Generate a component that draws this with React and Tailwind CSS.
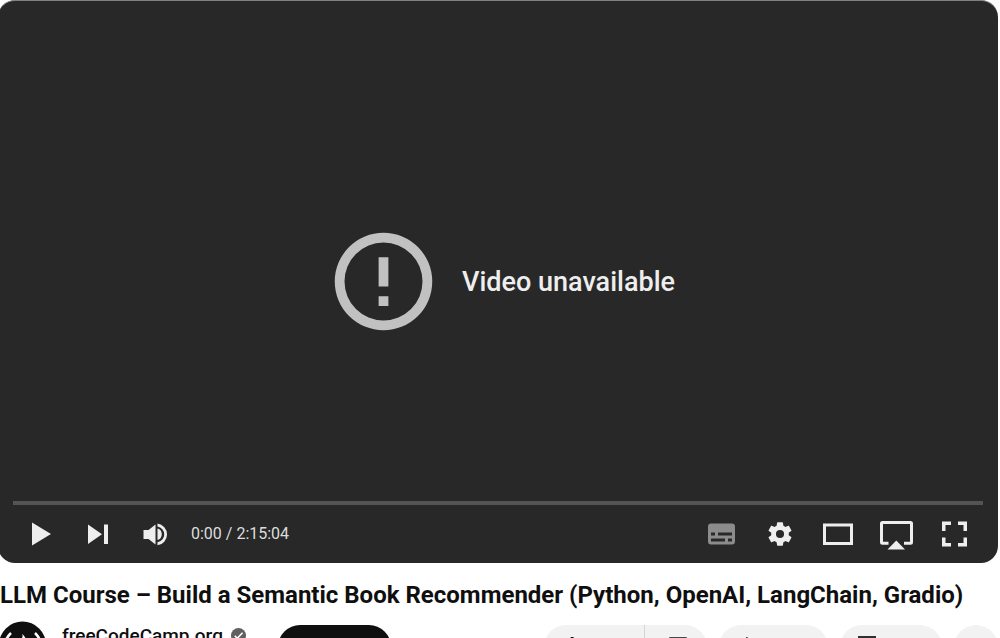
import React from "react";

function IconButton({ label, wide, children }) {
  return (
    <button
      type="button"
      aria-label={label}
      className={
        wide
          ? "flex h-[58px] w-[58px] items-center justify-center"
          : "flex h-[58px] w-[57px] items-center justify-center"
      }
    >
      <svg viewBox="0 0 58 58" className="h-[58px] w-[58px] shrink-0" fill="#eeeeee">
        {children}
      </svg>
    </button>
  );
}

function Message() {
  return (
    <div className="col-start-1 row-start-1 flex items-center justify-center gap-5 pl-1">
      <svg viewBox="0 0 24 24" className="h-[117px] w-[117px]" fill="#c1c1c1">
        <path d="M11 15h2v2h-2zm0-8h2v6h-2zM12 2a10 10 0 1 0 0 20 10 10 0 0 0 0-20zm0 18a8 8 0 1 1 0-16 8 8 0 0 1 0 16z" />
      </svg>
      <p className="text-[27px] leading-8 font-medium text-[#eeeeee]">Video unavailable</p>
    </div>
  );
}

function Controls() {
  return (
    <div className="col-start-1 row-start-1 self-end px-[15px]">
      <div className="h-1 bg-[#545454]" />
      <div className="flex items-center justify-between">
        <div className="flex items-center">
          <IconButton label="Play">
            <path d="M19 17.500v23L38 29z" />
          </IconButton>
          <IconButton label="Next">
            <path d="M18 19.500v19.500L32 29.200zM34 19.500h4v19.500h-4z" />
          </IconButton>
          <IconButton label="Mute">
            <path d="M16.500 25v9h5l7 5.500V19.500l-7 5.500zM30.500 23.500v11.500a6 6 0 0 0 0-11.500z" />
            <path d="M30.500 18.500v3a8 8 0 0 1 0 15.800v3a11 11 0 0 0 0-21.800z" />
          </IconButton>
          <span className="pl-[7px] text-base text-[#dddddd]">0:00 / 2:15:04</span>
        </div>
        <div className="flex items-center">
          <IconButton label="Subtitles" wide>
            <path
              fill="#8c8c8c"
              fillRule="evenodd"
              d="M18 18.500h21a3 3 0 0 1 3 3v15a3 3 0 0 1-3 3H18a3 3 0 0 1-3-3v-15a3 3 0 0 1 3-3zM18 27.500v3h4v-3zM25 27.500v3H39v-3zM18 33.500v3H32v-3zM35 33.500v3h4v-3z"
            />
          </IconButton>
          <IconButton label="Settings" wide>
            <g transform="translate(14.300 14.300) scale(1.225)">
              <path d="M19.14 12.940c.04-.3.06-.61.06-.94 0-.32-.02-.64-.07-.94l2.030-1.580c.18-.14.23-.41.12-.61l-1.920-3.320c-.12-.22-.37-.29-.59-.22l-2.390.96c-.5-.38-1.030-.7-1.620-.94l-.36-2.540c-.04-.24-.24-.41-.48-.41h-3.840c-.24 0-.43.17-.47.41l-.36 2.540c-.59.24-1.130.57-1.620.94l-2.390-.96c-.22-.08-.47 0-.59.22L2.740 8.870c-.12.21-.08.47.12.61l2.030 1.580c-.05.3-.09.63-.09.94s.02.64.07.94l-2.030 1.580c-.18.14-.23.41-.12.61l1.920 3.320c.12.22.37.29.59.22l2.390-.96c.5.38 1.030.7 1.620.94l.36 2.540c.05.24.24.41.48.41h3.840c.24 0 .44-.17.47-.41l.36-2.540c.59-.24 1.130-.56 1.620-.94l2.390.96c.22.08.47 0 .59-.22l1.920-3.320c.12-.22.07-.47-.12-.61zM12 15.300a3.300 3.300 0 1 1 0-6.600 3.300 3.300 0 0 1 0 6.600z" />
            </g>
          </IconButton>
          <IconButton label="Theater mode" wide>
            <path fillRule="evenodd" d="M14 18.500h30v21.500H14zM17 21.500V37h24V21.500z" />
          </IconButton>
          <IconButton label="AirPlay" wide>
            <path d="M21.500 38.300H15.500a1 1 0 0 1-1-1V18.500a1 1 0 0 1 1-1h28a1 1 0 0 1 1 1V37.300a1 1 0 0 1-1 1H37" fill="none" stroke="#eeeeee" strokeWidth="3" />
            <path d="M29.300 35.500L20.500 44.500H38z" />
          </IconButton>
          <IconButton label="Full screen" wide>
            <path d="M17 16.500h9v3.500h-5.500v6H17zM33 16.500h9V26h-3.500v-6H33zM17 32.500h3.500v5.500H26v3.500h-9zM38.500 32.500H42v9h-9V38h5.500z" />
          </IconButton>
        </div>
      </div>
    </div>
  );
}

function ChannelRow() {
  return (
    <div className="flex items-start justify-between pt-[10px]">
      <div className="flex items-start">
        <a href="#channel" aria-label="Channel page" className="block">
          <svg viewBox="0 0 48 48" className="h-12 w-12">
            <circle cx="24.500" cy="24" r="23.500" fill="#0f0f0f" />
            <path d="M13 12Q1 24 13 37M37 12q12 12 0 25" fill="none" stroke="#fff" strokeWidth="2.500" />
            <path d="M24 13c3 5-7 9-5 16 1 3 3 5 6 5s7-3 7-8c0-3-2-4-3-6 0 3-1 3-2 3 2-4 0-8-3-10z" fill="#fff" />
          </svg>
        </a>
        <div className="flex items-center gap-2 pt-[3px] pl-4">
          <a href="#channel" className="text-[19px] leading-6 font-medium text-[#0f0f0f]">
            freeCodeCamp.org
          </a>
          <svg viewBox="0 0 24 24" className="h-[15px] w-[15px]" role="img" aria-label="Verified">
            <circle cx="12" cy="12" r="12" fill="#606060" />
            <path d="M6 12.500l4 4L18.500 7.500" fill="none" stroke="#fff" strokeWidth="2.500" />
          </svg>
        </div>
        <button type="button" aria-label="Subscribe" className="mt-1 ml-8 h-11 w-[113px] rounded-full bg-[#0f0f0f]" />
      </div>
      <div className="flex gap-3 pt-1">
        <div className="flex h-11 w-[163px] rounded-full bg-[#f2f2f2]">
          <button type="button" aria-label="Like" className="flex w-[100px] pt-3 pl-4">
            <svg viewBox="0 0 24 24" className="h-6 w-6" fill="none" stroke="#0f0f0f" strokeWidth="1.500">
              <path d="M3 11h4v10H3zM7 11l4.500-10.500c2 0 3 1.500 2.500 3.500l-1 4h7l-2 12H7" />
            </svg>
          </button>
          <button type="button" aria-label="Dislike" className="flex flex-1 border-l border-[#d4d4d4] pt-3 pl-5">
            <svg viewBox="0 0 24 24" className="h-6 w-6" fill="none" stroke="#0f0f0f" strokeWidth="1.500">
              <path d="M17 1h4v12h-4zM17 13l-4.500 9c-2 0-3-1.500-2.500-3.500l1-4.500H3L5 1h12" />
            </svg>
          </button>
        </div>
        <button type="button" aria-label="Share" className="flex h-11 w-[109px] rounded-full bg-[#f2f2f2] pt-3 pl-4">
          <svg viewBox="0 0 24 24" className="h-6 w-6" fill="none" stroke="#0f0f0f" strokeWidth="1.500">
            <path d="M12 1l9 9-9 9v-5c-5 0-7 2-9 5 1-6 4-9 9-10z" />
          </svg>
        </button>
        <button type="button" aria-label="Save" className="flex h-11 w-[102px] rounded-full bg-[#f2f2f2] pt-[11px] pl-[15px]">
          <svg viewBox="0 0 24 24" className="h-6 w-6" fill="none" stroke="#303030" strokeWidth="2">
            <path d="M4 1h16v20l-8-5-8 5z" />
          </svg>
        </button>
        <button type="button" aria-label="More actions" className="h-11 w-11 rounded-full bg-[#f2f2f2]" />
      </div>
    </div>
  );
}

export default function App() {
  return (
    <main className="h-screen overflow-hidden bg-white font-['Roboto',sans-serif]">
      <div className="mr-0.5 -ml-0.5">
        <section
          aria-label="Video player"
          className="grid aspect-video overflow-hidden rounded-[17px] border-t border-[#7e827e] bg-[#282828]"
        >
          <Message />
          <Controls />
        </section>
        <h1 className="pt-4 pl-0.5 text-2xl leading-8 font-bold whitespace-nowrap text-[#0f0f0f]">
          LLM Course – Build a Semantic Book Recommender (Python, OpenAI, LangChain, Gradio)
        </h1>
        <ChannelRow />
      </div>
    </main>
  );
}
